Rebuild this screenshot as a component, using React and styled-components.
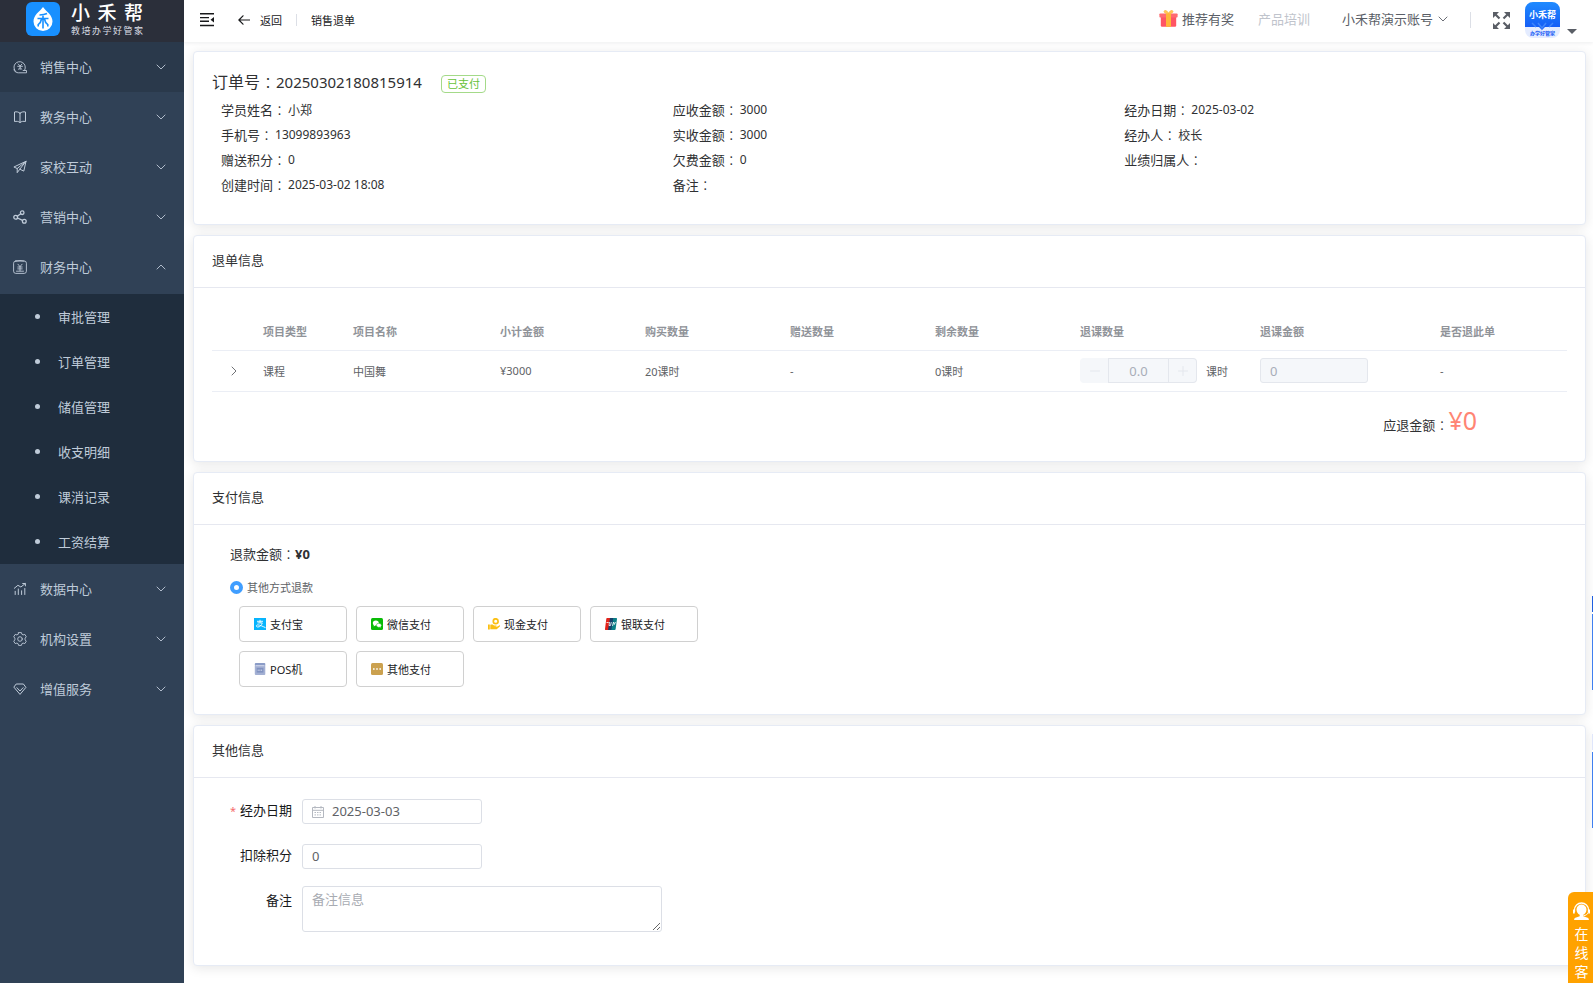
import React from "react";
import styled, { createGlobalStyle } from "styled-components";

const GlobalStyle = createGlobalStyle`
    * {
        box-sizing: border-box;
    }
    body {
        margin: 0;
        background: #fff;
        color: #303133;
        font-family: "Noto Sans", "Noto Sans CJK SC", sans-serif;
        font-size: 13px;
    }
    button, input, textarea {
        font-family: inherit;
        margin: 0;
    }
    ul, dl, dd, h1, h2, p {
        margin: 0;
        padding: 0;
        list-style: none;
        font-weight: normal;
    }
    a {
        color: inherit;
        text-decoration: none;
    }
`

const Page = styled.div`
    display: flex;
    min-height: 100vh;
`

/* ---------- sidebar ---------- */

const Sidebar = styled.aside`
    flex: 0 0 184px;
    background: #304156;
    color: #bfcbd9;
`

const Brand = styled.a`
    display: flex;
    align-items: center;
    gap: 11px;
    height: 42px;
    padding: 0 0 4px 26px;
    background: #2b2f3a;
    color: #fff;
`

const BrandText = styled.span`
    display: flex;
    flex-direction: column;
    width: 72px;
`

const BrandName = styled.span`
    display: flex;
    justify-content: space-between;
    font-size: 19px;
    font-weight: 500;
    line-height: 23px;
`

const BrandSlogan = styled.span`
    display: flex;
    justify-content: space-between;
    font-size: 9px;
    line-height: 11px;
    color: #dcdfe6;
`

const MenuButton = styled.button`
    display: flex;
    align-items: center;
    width: 100%;
    height: 50px;
    padding: 0 18px 0 13px;
    border: 0;
    background: ${(props) => (props.$hover ? "#2a394b" : "transparent")};
    color: inherit;
    font-size: 13px;
    text-align: left;

    span {
        flex: 1;
        margin-left: 13px;
        padding-bottom: 2px;
    }
`

const SubMenu = styled.ul`
    margin-top: 2px;
    background: #1f2d3d;
`

const SubLink = styled.a`
    display: flex;
    align-items: center;
    gap: 18px;
    height: 45px;
    padding-left: 35px;

    &::before {
        content: "";
        width: 5px;
        height: 5px;
        border-radius: 50%;
        background: #bfcbd9;
    }
`

/* ---------- top bar ---------- */

const Main = styled.div`
    flex: 1;
    min-width: 0;
`

const TopBar = styled.header`
    display: flex;
    align-items: center;
    height: 42px;
    padding: 0 16px 2px;
    background: #fff;
    box-shadow: 0 1px 4px rgba(0, 21, 41, 0.08);
    color: #5a5e66;
`

const IconButton = styled.button`
    display: flex;
    align-items: center;
    padding: 0;
    border: 0;
    background: none;
    color: inherit;
    font-size: ${(props) => (props.$small ? "11px" : "13px")};
    gap: ${(props) => props.$gap || 0}px;
`

const Crumbs = styled.nav`
    display: flex;
    align-items: center;
    flex: 1;
    margin-left: 24px;
    font-size: 11px;
    color: #18191b;
`

const Divider = styled.i`
    width: 1px;
    height: ${(props) => props.$height}px;
    margin: 0 ${(props) => props.$space}px;
    background: #dcdfe6;
`

const Tools = styled.div`
    display: flex;
    align-items: center;
`

const Links = styled.nav`
    display: flex;
    align-items: center;
    padding-bottom: 3px;
`

const ToolLink = styled.a`
    display: flex;
    align-items: center;
    gap: 4px;
    margin-right: ${(props) => props.$space || 24}px;
    color: ${(props) => (props.$muted ? "#c0c4cc" : "inherit")};
`

const AvatarButton = styled.button`
    display: flex;
    align-items: flex-end;
    gap: 7px;
    margin-left: 15px;
    padding: 0;
    border: 0;
    background: none;

    &::after {
        content: "";
        margin-bottom: 4px;
        border: 5px solid transparent;
        border-top-color: #5a5e66;
        border-bottom: 0;
    }
`

/* ---------- cards ---------- */

const Content = styled.main`
    display: flex;
    flex-direction: column;
    gap: 10px;
    padding: 9px 7px 16px 9px;
`

const CardBox = styled.section`
    border: 1px solid #e6ebf5;
    border-radius: 4px;
    background: #fff;
    box-shadow: 0 2px 12px rgba(0, 0, 0, 0.1);
`

const CardTitle = styled.h2`
    height: 52px;
    padding: 0 18px;
    border-bottom: 1px solid #e6e8f0;
    font-size: 13px;
    line-height: 48px;
`

const OrderBody = styled.div`
    padding: 16px 18px 27px;
`

const OrderTitle = styled.h1`
    display: flex;
    align-items: center;
    height: 28px;
    margin-bottom: 1px;
    font-size: 16px;
    line-height: 20px;
`

const OrderNo = styled.span`
    font-size: 15px;
`

const Tag = styled.span`
    margin: 4px 0 0 19px;
    padding: 0 5px;
    border: 1px solid #a4da89;
    border-radius: 4px;
    font-size: 11px;
    line-height: 16px;
    color: #67c23a;
`

const OrderGrid = styled.div`
    display: grid;
    grid-template-columns: repeat(3, 1fr);
    align-items: start;
`

const OrderRow = styled.div`
    display: flex;
    align-items: center;
    height: 25px;
    padding-left: 9px;

    dd {
        padding-left: 2px;
        font-size: 12px;
    }
`

/* full-width colon, centred in its cell */
const Colon = styled.span`
    font-family: "Noto Sans CJK TC", sans-serif;
    font-weight: 300;
`

/* ---------- refund table ---------- */

const RefundBody = styled.div`
    padding: 24px 18px 18px;
`

const Table = styled.table`
    width: 100%;
    border-collapse: collapse;
    table-layout: fixed;
    font-size: 11px;
    color: #606266;

    th, td {
        padding: 0 9px;
        border-bottom: 1px solid #ebeef5;
        text-align: left;
    }
    th {
        height: 38px;
        color: #909399;
        font-weight: 700;
    }
    td {
        height: 41px;
    }
`

const Expand = styled.button`
    display: flex;
    padding: 0 0 0 8px;
    border: 0;
    background: none;
    color: #606266;
`

const Stepper = styled.div`
    display: flex;
    align-items: center;
`

const StepButton = styled.button`
    flex: 0 0 28px;
    display: flex;
    align-items: center;
    justify-content: center;
    height: 25px;
    padding: 0;
    border: 1px solid ${(props) => (props.$plus ? "#e4e7ed" : "#f5f7fa")};
    border-width: ${(props) => (props.$plus ? "1px 1px 1px 0" : "1px 0 1px 1px")};
    border-radius: ${(props) => (props.$plus ? "0 4px 4px 0" : "4px 0 0 4px")};
    background: #f5f7fa;
    color: #e4e7ed;
`

const StepInput = styled.input`
    width: 61px;
    height: 25px;
    border: 1px solid #e4e7ed;
    background: #f5f7fa;
    color: #a8adb8;
    font-size: 13px;
    text-align: center;
`

const Unit = styled.label`
    margin-left: 9px;
    white-space: nowrap;
`

const TextInput = styled.input`
    width: ${(props) => props.$width}px;
    height: 25px;
    padding: 0 9px 0 ${(props) => (props.$icon ? 29 : 9)}px;
    border: 1px solid #dcdfe6;
    border-radius: 3px;
    background: #fff;
    color: #606266;
    font-size: 13px;
    outline: none;

    &:disabled {
        border-color: #e4e7ed;
        background: #f5f7fa;
        color: #a8adb8;
    }
`

const Total = styled.p`
    display: flex;
    align-items: baseline;
    justify-content: flex-end;
    margin: 10px 90px 0 0;
    line-height: 36px;

    strong {
        color: #ff8573;
        font-size: 25px;
        font-weight: 400;
    }
`

/* ---------- payment ---------- */

const PayBody = styled.div`
    padding: 19px 36px 27px;
`

const RadioLabel = styled.label`
    display: flex;
    align-items: center;
    gap: 4px;
    margin: 16px 0 9px;
    font-size: 11px;
    line-height: 18px;
    color: #606266;

    input {
        appearance: none;
        width: 13px;
        height: 13px;
        margin: 0;
        border: 4px solid #409eff;
        border-radius: 50%;
        background: #fff;
    }
`

const PayGrid = styled.div`
    display: grid;
    grid-template-columns: repeat(4, 108px);
    gap: 9px;
    padding-left: 9px;
`

const PayButton = styled.button`
    display: flex;
    align-items: center;
    gap: 4px;
    height: 36px;
    padding: 0 14px;
    border: 1px solid #d0d0d0;
    border-radius: 4px;
    background: #fff;
    color: #202124;
    font-size: 11px;
`

/* ---------- form ---------- */

const Form = styled.form`
    display: flex;
    flex-direction: column;
    gap: 20px;
    padding: 21px 36px 33px;
`

const FormRow = styled.div`
    display: flex;
    align-items: flex-start;
    margin-top: ${(props) => (props.$tall ? "-3px" : "0")};
`

const FormLabel = styled.label`
    width: 72px;
    padding-right: 10px;
    padding-top: ${(props) => (props.$tall ? "3px" : "0")};
    line-height: 22px;
    text-align: right;
    color: #18191b;
    white-space: nowrap;

    &::before {
        content: "${(props) => (props.$required ? "*" : "")}";
        margin-right: 4px;
        color: #f56c6c;
        font-size: 11px;
    }
`

const DateField = styled.div`
    position: relative;

    svg {
        position: absolute;
        top: 7px;
        left: 10px;
    }
`

const Remark = styled.textarea`
    width: 360px;
    height: 46px;
    padding: 3px 9px;
    border: 1px solid #dcdfe6;
    border-radius: 3px;
    font-size: 13px;
    line-height: 19px;
    resize: vertical;

    &::placeholder {
        color: #a8abb2;
    }
`

/* ---------- floating pieces on the right edge ---------- */

const Service = styled.button`
    position: fixed;
    right: 0;
    bottom: 0;
    display: flex;
    flex-direction: column;
    align-items: center;
    width: 25px;
    padding: 10px 0 2px 2px;
    border: 0;
    border-radius: 6px 0 0 0;
    background: #ffa200;
    color: #fff;
    font-size: 14px;
    line-height: 19px;

    svg {
        margin-bottom: 4px;
    }
`

const EdgeTab = styled.i`
    position: fixed;
    right: 0;
    bottom: ${(props) => props.$bottom}px;
    width: 1px;
    height: 94px;
    background: linear-gradient(${(props) => props.$top} 16px, #fff 16px, #fff 18px, #3f80f0 18px);
    box-shadow: 0 0 8px rgba(0, 0, 0, 0.12);
`

/* ---------- icons ---------- */

const Line = ({ size = 14, box = 14, width = 1, children }) => (
    <svg width={size} height={size} viewBox={`0 0 ${box} ${box}`} fill="none" stroke="currentColor"
        strokeWidth={width} strokeLinecap="round" strokeLinejoin="round" aria-hidden="true">
        {children}
    </svg>
)

const Chevron = ({ up, right }) => (
    <Line size={10} box={10} width={0.9}>
        <path d={right ? "M3 1l4 4-4 4" : up ? "M1 7l4-4 4 4" : "M1 3l4 4 4-4"} />
    </Line>
)

const menuIcons = {
    sale: (
        <Line width={0.9}>
            <path d="M2.800 11.600A5.700 5.700 0 1 1 11.800 9.800" />
            <path d="M1 9.500c.3 2 2 3.300 4.300 3.300h8.200v-2.300h-3.300" />
            <path d="M5.200 4l1.900 2 1.900-2M7.100 6v3.500M4.700 6.300h4.800M5.300 9.300l1.800-1.600 1.800 1.600" />
        </Line>
    ),
    book: (
        <Line>
            <path d="M7 3.200C5.500 1.800 3.500 1.600 1.500 2v9.500c2-.4 4-.2 5.500 1 1.500-1.200 3.500-1.400 5.500-1V2c-2-.4-4-.2-5.500 1.200zM7 3.200v9.300" />
        </Line>
    ),
    plane: (
        <Line>
            <path d="M13 1.300L.9 7l3.300 1.500L13 1.300l-2.200 9.800-4-1.900M4.200 8.500v4.200l2.600-3.500L13 1.300" />
        </Line>
    ),
    share: (
        <Line width={1.3}>
            <circle cx="2.700" cy="7.300" r="1.900" />
            <circle cx="9.200" cy="2.700" r="1.800" />
            <circle cx="11.300" cy="11.300" r="1.900" />
            <path d="M4.300 6.200l3.400-2.500M4.500 8l5 2.400" />
        </Line>
    ),
    money: (
        <Line width={0.9}>
            <rect x=".6" y="1" width="12.800" height="12.400" rx="2.200" />
            <path d="M3 1Q7 0 11 1M4.900 4.200L7 6.600l2.100-2.400M7 6.600v4.200M4.800 7h4.400M4.800 8.900h4.400M3.500 11.200h7" />
        </Line>
    ),
    data: (
        <Line>
            <path d="M1.300 6.300l3.600-3 3 1.700 4.300-3.400M9.700 1.500h2.700v2.400M2.200 12.500V9.300M5.300 12.500V7M8.600 12.500V8.800M11.800 12.500V6.500" />
        </Line>
    ),
    gear: (
        <Line width={0.9}>
            <path d="M5.600.6h2.800l.5 1.700 1.200.6 1.700-.5 1.500 2.400-1.200 1.300v1.800l1.200 1.300-1.500 2.400-1.700-.5-1.200.6-.5 1.700H5.600l-.5-1.700-1.200-.6-1.700.5L.7 9.200l1.200-1.300V6.100L.7 4.800l1.500-2.400 1.700.5 1.200-.6z" />
            <circle cx="7" cy="7" r="2.300" />
        </Line>
    ),
    gem: (
        <Line>
            <path d="M3.600 2h6.800l2.500 3.400L7 12.400 1.100 5.400z" />
            <path d="M3.900 5.700L7 9l3.100-3.300" />
        </Line>
    ),
}

const LogoMark = () => (
    <svg width="34" height="34" viewBox="0 0 34 34" aria-hidden="true">
        <rect width="34" height="34" rx="6" fill="#1890ff" />
        <path d="M17 5c3.500 4.800 9.500 8 9.500 14.500a9.500 9.500 0 0 1-19 0C7.500 13 13.500 9.800 17 5z" fill="#fff" />
        <path d="M21 11.500c-2 1-4.500 1.400-7.500 1.500M11.500 16.500h11M17 13v13.500M15.500 17c-.4 2.500-1.500 4.500-3.300 5.700v1.800M18.500 17c.4 2.500 1.500 4.500 3.300 5.700v1.800"
            fill="none" stroke="#1890ff" strokeWidth="1.600" />
    </svg>
)

const FoldIcon = () => (
    <svg width="14" height="14" viewBox="0 0 14 14" fill="#18191b" aria-hidden="true">
        <path d="M0 0h14v1.500H0zM0 4h9v1.300H0zM0 7.600h9v1.300H0zM0 11.800h14v1.500H0zM14 4v5.500L10.500 6.700z" />
    </svg>
)

const GiftIcon = () => (
    <svg width="19" height="17" viewBox="0 0 19 17" aria-hidden="true">
        <path d="M1.800 7h15.400v8.600a1.200 1.200 0 0 1-1.200 1.200H3a1.200 1.200 0 0 1-1.200-1.200z" fill="#ff5564" />
        <rect x=".4" y="3.500" width="18.200" height="4" rx=".8" fill="#ff6b72" />
        <path d="M7 3.500h5v13.300H7z" fill="#ffb638" />
        <path d="M9.500 3.800C7 3.800 4.600 2.600 5.200 1.100c.7-1.600 3.800 0 4.300 2.700.5-2.700 3.600-4.300 4.300-2.700.6 1.500-1.800 2.700-4.300 2.700z"
            fill="#ffc85a" stroke="#ffb638" strokeWidth=".8" />
    </svg>
)

const FullscreenIcon = () => (
    <svg width="17" height="17" viewBox="0 0 17 17" fill="#5a5e66" stroke="#5a5e66" aria-hidden="true">
        <g stroke="none">
            <path d="M0 0h6L0 6zM17 0v6l-6-6zM0 17v-6l6 6zM17 17h-6l6-6z" />
        </g>
        <path d="M2 2l4.500 4.500M15 2l-4.500 4.500M2 15l4.500-4.500M15 15l-4.500-4.500" strokeWidth="2.200" />
    </svg>
)

const Avatar = () => (
    <svg width="35" height="36" viewBox="0 0 35 36" aria-hidden="true">
        <defs>
            <linearGradient id="avatarBlue" x1="0" y1="0" x2="0" y2="1">
                <stop offset="0" stopColor="#1f8bff" />
                <stop offset="1" stopColor="#1459f5" />
            </linearGradient>
        </defs>
        <rect width="35" height="36" rx="8" fill="#e4ecff" />
        <path d="M0 8a8 8 0 0 1 8-8h19a8 8 0 0 1 8 8v17H20l-3 3-3-3H0z" fill="url(#avatarBlue)" />
        <path d="M7 21l4 4M13 21l4 5 4-5M28 21l-4 4" fill="none" stroke="#3f86fb" strokeWidth="1.500" />
        <text x="17.500" y="16" fontSize="9" fontWeight="700" fill="#fff" textAnchor="middle">小禾帮</text>
        <text x="17.500" y="33" fontSize="5" fontWeight="700" fill="#1459f5" textAnchor="middle">办学好管家</text>
    </svg>
)

const CalendarIcon = () => (
    <svg width="12" height="12" viewBox="0 0 12 12" fill="none" stroke="#b4b8c0" aria-hidden="true">
        <path d="M.5 1.500h11v10H.5zM.5 4.300h11M3 0v2.500M9 0v2.500" />
        <path d="M2.500 6.500h7M2.500 8.900h7" strokeDasharray="1.500 1" />
    </svg>
)

const payIcons = {
    alipay: (
        <>
            <rect width="12" height="12" fill="#06b4fd" />
            <path d="M3 3.300h6M6 1.800v3M3.500 4.900h4.800C7.800 6.900 6 9 3.900 9c-2.200 0-2-2.300.2-2.100C6 7.100 8.500 8.300 11.500 9.600"
                fill="none" stroke="#fff" strokeWidth=".9" />
        </>
    ),
    wechat: (
        <>
            <rect width="12" height="12" rx="1.500" fill="#09bb07" />
            <ellipse cx="4.800" cy="4.900" rx="3" ry="2.500" fill="#fff" />
            <ellipse cx="7.900" cy="7.300" rx="2.500" ry="2.100" fill="#fff" stroke="#09bb07" strokeWidth=".5" />
            <path d="M2.800 6.500v2l1.600-1.200zM9 8.800l1 1V8.200z" fill="#fff" />
        </>
    ),
    cash: (
        <>
            <circle cx="7.700" cy="3.200" r="2.400" fill="none" stroke="#fbbf12" strokeWidth="1.700" />
            <path d="M0 6.500h1.800v5H0zM2.300 6.800c2-.9 3 .2 3.800.6h2c.9.1.8 1.300 0 1.400L6 9l2.500.1 2.700-1.700c.8-.3 1.200.5.600 1.100L8.700 11.300H2.300z"
                fill="#fbbf12" />
        </>
    ),
    union: (
        <>
            <path d="M2 0h4L4 12H1C.2 12-.1 11.600 0 11L1.300.7Q1.500 0 2 0z" fill="#e2231a" />
            <path d="M5 0h4L7 12H3z" fill="#17416b" />
            <path d="M8.300 0h3c.6 0 .8.400.7 1l-1.400 10.200c-.1.500-.4.800-1 .8H6.300z" fill="#0a7f86" />
            <path d="M1.500 4.500h2.200M4.500 4l-.5 3.500h1.500L6.300 4M7.500 8l1-4 .8 2.500L10.500 4" fill="none" stroke="#fff" strokeWidth=".8" />
        </>
    ),
    pos: (
        <>
            <rect x=".8" y="0" width="10.500" height="3.200" rx="1" fill="#8b9cc7" />
            <rect x=".8" y="2.500" width="10.500" height="9.500" rx="1" fill="#a3b0d3" />
            <path d="M1.500 2.700h9" stroke="#dfe5f3" strokeWidth=".8" />
            <rect x="2.700" y="4.800" width="6.700" height="4.800" fill="#8192c0" />
            <path d="M3.700 7.200h4.700" stroke="#dfe5f3" strokeDasharray="1 .7" />
        </>
    ),
    other: (
        <>
            <rect width="12" height="12" rx="1.500" fill="#cba14f" />
            <path d="M2 5.200h1.600v1.600H2zM5.200 5.200h1.600v1.600H5.200zM8.400 5.200H10v1.600H8.400z" fill="#fff" />
        </>
    ),
}

const ServiceIcon = () => (
    <svg width="17" height="18" viewBox="0 0 17 18" aria-hidden="true">
        <path d="M1.500 10V8a7 7 0 0 1 14 0v2" fill="none" stroke="#fff" strokeWidth="1.300" />
        <path d="M0 7.500h1.800v4H0zM15.200 7.500H17v4h-1.800z" fill="#fff" />
        <path d="M8.500 2.500a5 5 0 0 1 5 5c0 2.400-1.400 4.400-3.200 5.300v1.400l5 1.800.7 2H1l.7-2 5-1.800v-1.400C4.900 11.900 3.500 9.900 3.500 7.500a5 5 0 0 1 5-5z" fill="#fff" />
        <path d="M15 10.500c-.5 2-2 3-4.500 3" fill="none" stroke="#fff" />
    </svg>
)

/* ---------- data ---------- */

const menu = [
    { icon: "sale", label: "销售中心", hover: true },
    { icon: "book", label: "教务中心" },
    { icon: "plane", label: "家校互动" },
    { icon: "share", label: "营销中心" },
    {
        icon: "money",
        label: "财务中心",
        items: ["审批管理", "订单管理", "储值管理", "收支明细", "课消记录", "工资结算"],
    },
    { icon: "data", label: "数据中心" },
    { icon: "gear", label: "机构设置" },
    { icon: "gem", label: "增值服务" },
]

const orderInfo = [
    [["学员姓名", "小郑"], ["手机号", "13099893963"], ["赠送积分", "0"], ["创建时间", "2025-03-02 18:08"]],
    [["应收金额", "3000"], ["实收金额", "3000"], ["欠费金额", "0"], ["备注", ""]],
    [["经办日期", "2025-03-02"], ["经办人", "校长"], ["业绩归属人", ""]],
]

const columns = [
    ["", 42],
    ["项目类型", 90],
    ["项目名称", 147],
    ["小计金额", 145],
    ["购买数量", 145],
    ["赠送数量", 145],
    ["剩余数量", 145],
    ["退课数量", 180],
    ["退课金额", 180],
    ["是否退此单", undefined],
]

const payments = [
    ["alipay", "支付宝"],
    ["wechat", "微信支付"],
    ["cash", "现金支付"],
    ["union", "银联支付"],
    ["pos", "POS机"],
    ["other", "其他支付"],
]

const SideMenu = () => (
    <Sidebar>
        <Brand href="#">
            <LogoMark />
            <BrandText>
                <BrandName>{[..."小禾帮"].map((c) => <span key={c}>{c}</span>)}</BrandName>
                <BrandSlogan>{[..."教培办学好管家"].map((c) => <span key={c}>{c}</span>)}</BrandSlogan>
            </BrandText>
        </Brand>
        <ul>
            {menu.map((entry) => (
                <li key={entry.label}>
                    <MenuButton type="button" $hover={entry.hover} aria-expanded={!!entry.items}>
                        {menuIcons[entry.icon]}
                        <span>{entry.label}</span>
                        <Chevron up={!!entry.items} />
                    </MenuButton>
                    {entry.items && (
                        <SubMenu>
                            {entry.items.map((item) => (
                                <li key={item}><SubLink href="#">{item}</SubLink></li>
                            ))}
                        </SubMenu>
                    )}
                </li>
            ))}
        </ul>
    </Sidebar>
)

const Header = () => (
    <TopBar>
        <IconButton type="button" aria-label="menu"><FoldIcon /></IconButton>
        <Crumbs>
            <IconButton type="button" $small $gap={10}>
                <Line size={12} box={12} width={1.2}><path d="M11.500 6H1M5 1.800L.9 6 5 10.200" /></Line>
                返回
            </IconButton>
            <Divider $height={12} $space={14} />
            <span>销售退单</span>
        </Crumbs>
        <Tools>
            <Links>
                <ToolLink href="#"><GiftIcon />推荐有奖</ToolLink>
                <ToolLink href="#" $muted $space={32}>产品培训</ToolLink>
                <IconButton type="button" $gap={5}>小禾帮演示账号<Chevron /></IconButton>
            </Links>
            <Divider $height={16} $space={22} />
            <IconButton type="button" aria-label="fullscreen"><FullscreenIcon /></IconButton>
            <AvatarButton type="button" aria-label="account"><Avatar /></AvatarButton>
        </Tools>
    </TopBar>
)

const OrderCard = () => (
    <CardBox>
        <OrderBody>
            <OrderTitle>
                订单号<Colon>：</Colon><OrderNo>20250302180815914</OrderNo>
                <Tag>已支付</Tag>
            </OrderTitle>
            <OrderGrid>
                {orderInfo.map((list, i) => (
                    <dl key={i}>
                        {list.map(([name, value]) => (
                            <OrderRow key={name}>
                                <dt>{name}<Colon>：</Colon></dt>
                                <dd>{value}</dd>
                            </OrderRow>
                        ))}
                    </dl>
                ))}
            </OrderGrid>
        </OrderBody>
    </CardBox>
)

const RefundCard = () => (
    <CardBox>
        <CardTitle>退单信息</CardTitle>
        <RefundBody>
            <Table>
                <colgroup>
                    {columns.map(([name, width]) => <col key={name} width={width} />)}
                </colgroup>
                <thead>
                    <tr>{columns.map(([name]) => <th key={name}>{name}</th>)}</tr>
                </thead>
                <tbody>
                    <tr>
                        <td><Expand type="button" aria-label="expand"><Chevron right /></Expand></td>
                        <td>课程</td>
                        <td>中国舞</td>
                        <td>¥3000</td>
                        <td>20课时</td>
                        <td>-</td>
                        <td>0课时</td>
                        <td>
                            <Stepper>
                                <StepButton type="button" disabled aria-label="minus">
                                    <Line size={10} box={10}><path d="M.5 5h9" /></Line>
                                </StepButton>
                                <StepInput id="refundCount" defaultValue="0.0" disabled />
                                <StepButton type="button" disabled $plus aria-label="plus">
                                    <Line size={10} box={10}><path d="M.5 5h9M5 .5v9" /></Line>
                                </StepButton>
                                <Unit htmlFor="refundCount">课时</Unit>
                            </Stepper>
                        </td>
                        <td><TextInput $width={108} defaultValue="0" disabled aria-label="退课金额" /></td>
                        <td>-</td>
                    </tr>
                </tbody>
            </Table>
            <Total>应退金额<Colon>：</Colon><strong>¥0</strong></Total>
        </RefundBody>
    </CardBox>
)

const PayCard = () => (
    <CardBox>
        <CardTitle>支付信息</CardTitle>
        <PayBody>
            <p>退款金额<Colon>：</Colon><b>¥0</b></p>
            <RadioLabel>
                <input type="radio" name="refundWay" defaultChecked />
                其他方式退款
            </RadioLabel>
            <PayGrid>
                {payments.map(([icon, label]) => (
                    <PayButton type="button" key={icon}>
                        <svg width="12" height="12" viewBox="0 0 12 12" aria-hidden="true">{payIcons[icon]}</svg>
                        {label}
                    </PayButton>
                ))}
            </PayGrid>
        </PayBody>
    </CardBox>
)

const OtherCard = () => (
    <CardBox>
        <CardTitle>其他信息</CardTitle>
        <Form>
            <FormRow>
                <FormLabel htmlFor="date" $required>经办日期</FormLabel>
                <DateField>
                    <CalendarIcon />
                    <TextInput id="date" $width={180} $icon defaultValue="2025-03-03" />
                </DateField>
            </FormRow>
            <FormRow>
                <FormLabel htmlFor="points">扣除积分</FormLabel>
                <TextInput id="points" $width={180} defaultValue="0" />
            </FormRow>
            <FormRow $tall>
                <FormLabel htmlFor="remark" $tall>备注</FormLabel>
                <Remark id="remark" placeholder="备注信息" />
            </FormRow>
        </Form>
    </CardBox>
)

const App = () => {
    return (
        <Page>
            <GlobalStyle />
            <SideMenu />
            <Main>
                <Header />
                <Content>
                    <OrderCard />
                    <RefundCard />
                    <PayCard />
                    <OtherCard />
                </Content>
            </Main>
            <EdgeTab $bottom={293} $top="#1f5fe0" />
            <EdgeTab $bottom={155} $top="#dfe6fb" />
            <Service type="button">
                <ServiceIcon />
                <span>在</span>
                <span>线</span>
                <span>客</span>
            </Service>
        </Page>
    )
}

export default App;
